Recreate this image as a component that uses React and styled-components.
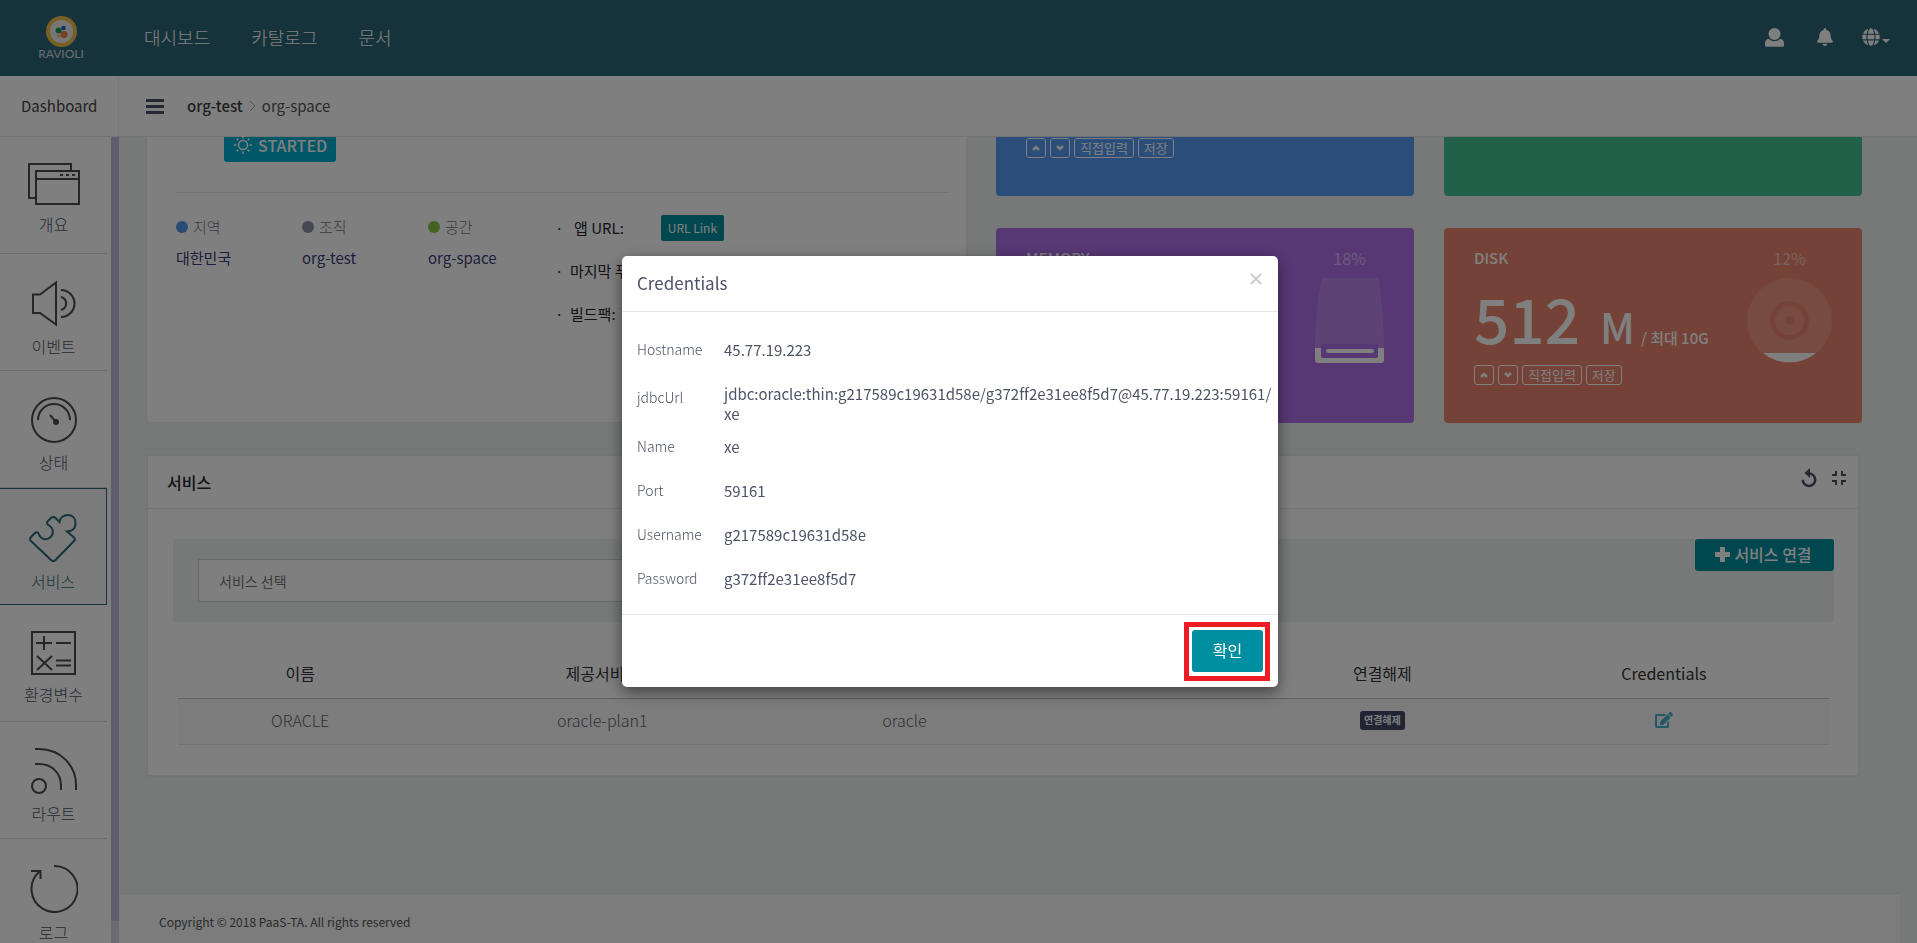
import React from "react";
import styled, { createGlobalStyle } from "styled-components";
import { FaBell, FaGlobe, FaEdit } from "react-icons/fa";
import { MdFullscreenExit } from "react-icons/md";

const Global = createGlobalStyle`
  *, *::before, *::after { box-sizing: border-box; }
  body {
    margin: 0;
    font-family: "Noto Sans CJK KR", "Noto Sans", sans-serif;
    font-size: 16px;
    line-height: 20px;
    font-variant-ligatures: none;
    color: #4d5365;
    background: #eff3f2;
  }
  button, input, select { font: inherit; color: inherit; }
  a { color: inherit; text-decoration: none; }
  h1, h2, h3, p, ul, dl, dd { margin: 0; padding: 0; font-weight: 400; }
  ul { list-style: none; }
  svg { display: block; flex: none; }
`;

const Page = styled.div`
  height: 100vh;
  display: flex;
  flex-direction: column;
  overflow: hidden;
`;

const TopBar = styled.header`
  flex: none;
  height: 76px;
  display: flex;
  align-items: center;
  padding: 0 27px 2px 37px;
  background: #2d6778;
  color: #fff;
`;

const Logo = styled.a`
  width: 48px;
  margin-right: 59px;
  padding-top: 2px;
  display: flex;
  flex-direction: column;
  align-items: center;
  font-family: "Lato", sans-serif;
  font-size: 12px;
  line-height: 14px;
  color: #d5dde0;
`;

const TopNav = styled.nav`
  flex: 1;
  display: flex;
  gap: 41px;
  font-size: 18px;
  font-weight: 300;
`;

const TopActions = styled.div`
  display: flex;
  align-items: center;
  gap: 28px;
`;

const IconButton = styled.button`
  display: flex;
  align-items: center;
  gap: 2px;
  padding: 0;
  border: 0;
  background: none;
`;

const UserButton = styled(IconButton)`
  margin-right: 4px;
`;

const SubBar = styled.div`
  flex: none;
  height: 61px;
  display: flex;
  align-items: center;
  background: #fff;
  border-bottom: 1px solid #e4e6e6;
`;

const SubTitle = styled.div`
  width: 119px;
  align-self: stretch;
  display: flex;
  align-items: center;
  padding-left: 21px;
  border-right: 1px solid #f0f0f0;
  font-size: 15px;
  color: #444;
`;

const MenuButton = styled(IconButton)`
  margin: 0 23px 0 27px;
  color: #4a4f66;
`;

const Crumbs = styled.div`
  display: flex;
  align-items: center;
  gap: 6px;
  font-size: 15px;
  color: #555;
`;

const CrumbHome = styled.a`
  font-weight: 500;
  color: #3c3c3c;
`;

const Body = styled.div`
  flex: 1;
  min-height: 0;
  display: flex;
`;

const Side = styled.aside`
  flex: none;
  width: 119px;
  display: flex;
  background: #fff;
`;

const SideList = styled.ul`
  width: 107px;
  overflow: hidden;
`;

const SideItem = styled.li`
  height: 117px;
  border-bottom: 1px solid #d9d9d9;
  & svg { color: #4d4d4d; }
  ${(p) =>
    p.$active &&
    `
    background: #f7f7f7;
    color: #2c6878;
    border-right: 1px solid #2c6878;
    border-bottom-color: #2c6878;
    box-shadow: inset 0 1px 0 #2c6878;
    & svg { color: #2c6878; }
  `}
`;

const SideLink = styled.a`
  display: flex;
  flex-direction: column;
  align-items: center;
  gap: 8px;
  padding-top: 26px;
  font-weight: 300;
  line-height: 22px;
`;

const SideScroll = styled.div`
  width: 8px;
  margin-left: 4px;
  padding-bottom: 22px;
  background: #d9d6ea;
  &::before {
    content: "";
    display: block;
    height: 100%;
    background: #bfbbdc;
  }
`;

const Main = styled.main`
  flex: 1;
  min-width: 0;
  display: flex;
  flex-direction: column;
  margin-right: 17px;
`;

const Content = styled.div`
  flex: 1;
  display: flex;
  flex-direction: column;
  gap: 31px;
  padding: 0 38px 0 27px;
`;

const Overview = styled.section`
  display: grid;
  grid-template-columns: 821px 1fr;
  gap: 29px;
`;

const AppCard = styled.div`
  padding: 0 17px 0 29px;
  background: #fff;
  border: 1px solid #e6e9e9;
  border-top: 0;
  border-radius: 0 0 5px 5px;
`;

const StatusBadge = styled.div`
  width: 112px;
  height: 25px;
  margin-left: 48px;
  padding: 0 10px 9px;
  display: flex;
  align-items: center;
  gap: 6px;
  border-radius: 0 0 3px 3px;
  background: #00aed1;
  color: #fff;
  font-weight: 500;
`;

const AppInfo = styled.div`
  display: flex;
  margin-top: 30px;
  padding-top: 21px;
  border-top: 1px solid #e2e4e4;
`;

const Place = styled.div`
  width: 126px;
  padding-top: 3px;
  font-size: 15px;
  color: #3c3c78;
`;

const PlaceLabel = styled.div`
  display: flex;
  align-items: center;
  gap: 5px;
  margin-bottom: 11px;
  font-weight: 300;
  color: #70747c;
  &::before {
    content: "";
    width: 12px;
    height: 12px;
    border-radius: 50%;
    background: ${(p) => p.$dot};
  }
`;

const Facts = styled.ul`
  display: flex;
  flex-direction: column;
  gap: 16px;
  padding-left: 1px;
  font-size: 15px;
  color: #26262e;
`;

const Fact = styled.li`
  display: flex;
  align-items: center;
  gap: 9px;
  min-height: 27px;
  &::before {
    content: "·";
    width: 6px;
  }
`;

const UrlName = styled.span`
  padding-left: 4px;
`;

const UrlLink = styled.a`
  margin-left: 28px;
  padding: 3px 7px;
  border-radius: 2px;
  background: #008fa1;
  color: #fff;
  font-size: 12px;
`;

const Tiles = styled.div`
  display: grid;
  grid-template-columns: 1fr 1fr;
  grid-template-rows: 59px 195px;
  gap: 32px 30px;
`;

const Tile = styled.article`
  display: flex;
  justify-content: space-between;
  padding: ${(p) => (p.$clipped ? "1px 30px" : "18px 30px")};
  border-radius: ${(p) => (p.$clipped ? "0 0 4px 4px" : "4px")};
  background: ${(p) => p.$color};
  color: #fff;
`;

const TileTitle = styled.h3`
  font-size: 15px;
  font-weight: 500;
  line-height: 24px;
`;

const Amount = styled.p`
  height: 95px;
  display: flex;
  align-items: baseline;
  line-height: 95px;
  font-size: 62px;
  font-weight: 500;
`;

const Unit = styled.span`
  margin: 0 6px 0 20px;
  font-size: 42px;
`;

const Limit = styled.span`
  font-size: 15px;
`;

const Chips = styled.div`
  display: flex;
  gap: 4px;
`;

const Chip = styled.button`
  height: 20px;
  min-width: 20px;
  display: flex;
  align-items: center;
  justify-content: center;
  padding: 0 5px;
  border: 1px solid #fff;
  border-radius: 3px;
  background: none;
  font-size: 13px;
  line-height: 16px;
`;

const Gauge = styled.div`
  display: flex;
  flex-direction: column;
  align-items: center;
  gap: 8px;
  line-height: 24px;
`;

const Percent = styled.span`
  opacity: 0.5;
`;

const Panel = styled.section`
  margin-right: 2px;
  border: 2px solid #e8ebeb;
  background: #fff;
`;

const PanelHead = styled.div`
  height: 53px;
  display: flex;
  align-items: center;
  gap: 9px;
  padding: 0 7px 0 19px;
  border-bottom: 1px solid #e4e6e6;
  color: #4a4f66;
`;

const PanelTitle = styled.h2`
  flex: 1;
  font-size: 16px;
  font-weight: 500;
  color: #26262c;
`;

const PanelTool = styled(IconButton)`
  padding-bottom: 8px;
`;

const PanelBody = styled.div`
  padding: 30px 24px 30px 25px;
`;

const Picker = styled.div`
  height: 83px;
  display: flex;
  align-items: flex-start;
  justify-content: space-between;
  padding-left: 25px;
  background: #eff3f2;
`;

const ServiceSelect = styled.select`
  appearance: none;
  width: 50%;
  height: 43px;
  margin-top: 20px;
  padding: 0 20px;
  border: 1px solid #ccd2d2;
  border-radius: 0;
  background: #fff;
  font-size: 14px;
  color: #777;
`;

const BindButton = styled.button`
  width: 139px;
  height: 32px;
  display: flex;
  align-items: center;
  justify-content: center;
  gap: 4px;
  padding: 0 2px 2px 0;
  border: 0;
  border-radius: 3px;
  background: #008fa1;
  color: #fff;
  font-weight: 500;
`;

const Services = styled.table`
  width: calc(100% - 10px);
  margin: 28px 5px 0;
  table-layout: fixed;
  border-collapse: collapse;
  text-align: center;
`;

const Col = styled.col`
  width: ${(p) => p.$w};
`;

const Th = styled.th`
  height: 48px;
  padding: 0 0 2px;
  border-bottom: 1px solid #bfc3c6;
  font-weight: 400;
  color: #333;
`;

const Td = styled.td`
  height: 46px;
  padding: 0 0 2px;
  border-bottom: 1px solid #e2e4e4;
  background: #f9f9f9;
  font-weight: 300;
  color: #62656f;
  & > button { margin: 0 auto; }
`;

const UnbindButton = styled.button`
  display: block;
  height: 19px;
  width: 45px;
  padding: 0;
  border: 0;
  border-radius: 3px;
  background: #454867;
  color: #fff;
  font-size: 10px;
  font-weight: 700;
  line-height: 18px;
`;

const EditButton = styled(IconButton)`
  color: #4bb0cc;
`;

const Footer = styled.footer`
  height: 50px;
  padding: 18px 40px 0;
  border-top: 1px solid #e4e6e6;
  background: #f8f9f9;
  font-size: 12px;
  color: #555;
`;

const Backdrop = styled.div`
  position: fixed;
  inset: 0;
  z-index: 10;
  display: flex;
  align-items: center;
  justify-content: center;
  padding: 0 17px 1px 0;
  background: rgba(0, 0, 0, 0.5);
`;

const Dialog = styled.div`
  width: 656px;
  border-radius: 5px;
  background: #fff;
  box-shadow: 0 5px 15px rgba(0, 0, 0, 0.5);
`;

const DialogHead = styled.div`
  height: 56px;
  display: flex;
  justify-content: space-between;
  padding: 17px 16px 0 15px;
  border-bottom: 1px solid #e5e5e5;
`;

const DialogTitle = styled.h2`
  font-size: 17px;
`;

const CloseButton = styled(IconButton)`
  height: 12px;
  color: #ccc;
`;

const Fields = styled.dl`
  padding: 15px 4px 14px 15px;
`;

const Field = styled.div`
  min-height: 44px;
  display: grid;
  grid-template-columns: 87px 1fr;
  align-items: center;
  font-size: 15px;
`;

const FieldName = styled.dt`
  font-size: 14px;
  font-weight: 300;
`;

const FieldValue = styled.dd`
  align-self: start;
  padding-top: 13px;
`;

const DialogFoot = styled.div`
  height: 73px;
  display: flex;
  justify-content: flex-end;
  padding: 7px 8px 0;
  border-top: 1px solid #e5e5e5;
`;

const Highlight = styled.div`
  width: 86px;
  height: 59px;
  padding: 3px;
  border: 5px solid #ed1c24;
`;

const OkButton = styled.button`
  width: 71px;
  height: 42px;
  padding: 0 0 2px;
  border: 0;
  border-radius: 3px;
  background: #008fa1;
  color: #fff;
`;

const line = { fill: "none", stroke: "currentColor", strokeWidth: 2 };

const WindowsIcon = () => (
  <svg width="52" height="42" viewBox="0 0 52 42" {...line}>
    <path d="M7 35H1V1h42v7M8 8h43v33H8zM8 16h43" />
    <path d="M32 12h3M38 12h3M44 12h3" />
  </svg>
);
const SpeakerIcon = () => (
  <svg width="46" height="47" viewBox="0 0 46 47" {...line}>
    <path d="M2 14.500h7L25 2.500v42L9 33H2zM30 10a13.500 13.500 0 0 1 0 27M30 17a6.700 6.700 0 0 1 0 13" />
  </svg>
);
const GaugeIcon = () => (
  <svg width="46" height="46" viewBox="0 0 46 46" {...line}>
    <circle cx="23" cy="23" r="22" />
    <path d="M7 23a16 16 0 0 1 32 0M19 18l6 7" />
    <circle cx="25" cy="25" r="2" fill="currentColor" />
  </svg>
);
const PuzzleIcon = () => (
  <svg width="48" height="48" viewBox="0 0 48 48" {...line}>
    <path d="M2 23l4-4c1.500-1.500 3-1 4 1.500 2 5 7 6 11 3s4-9-1.500-12.500c-2-1-2-2.500-.5-4l3-3c1.500-1.500 3-1.500 4.500 0l4 4c1-9 16-10 16 1 .2 6-4 8.500-8.500 8.500l7 6c1 1 1 2.500 0 3.500L26.500 46c-1.500 1.500-3 1.500-4.500 0L2 27c-1.300-1.300-1.300-2.700 0-4z" />
  </svg>
);
const CalcIcon = () => (
  <svg width="45" height="44" viewBox="0 0 45 44" {...line}>
    <path d="M1 1h43v42H1zM5 12h16M13 5v14M25 12h15M25 29.500h15M25 34.500h15M6 25l15 14M21 25L6 39" />
  </svg>
);
const RouteIcon = () => (
  <svg width="46" height="46" viewBox="0 0 46 46" {...line}>
    <circle cx="8" cy="38" r="7" />
    <path d="M4 1h4c22 0 37 17 37 36v5M4 16h4c13 0 22 9 22 22v4" />
  </svg>
);
const LogIcon = () => (
  <svg width="48" height="48" viewBox="0 0 48 48" {...line}>
    <path d="M24 1a23 23 0 1 1-15 6M1 6h9.500v8" />
  </svg>
);
const PersonIcon = () => (
  <svg width="19" height="19" viewBox="0 0 19 19" fill="#fff">
    <circle cx="9.500" cy="6" r="6" />
    <path d="M4 11c3.500 3 7.500 3 11 0 3 0 4 2 4 5v1.500c0 .8-.5 1.200-1.200 1.200H1.200C.5 18.700 0 18.300 0 17.500V16c0-3 1-5 4-5z" />
  </svg>
);
const SunIcon = () => (
  <svg width="18" height="18" viewBox="0 0 18 18" fill="none" stroke="#fff" strokeWidth="1.500">
    <circle cx="9" cy="9" r="4.500" />
    <path d="M9 0v2.500M9 15.500V18M0 9h2.500M15.500 9H18M2.600 2.600l1.700 1.700M13.700 13.700l1.700 1.700M15.400 2.600l-1.700 1.700M4.300 13.700l-1.700 1.700" />
  </svg>
);
const BarsIcon = () => (
  <svg width="18" height="15" viewBox="0 0 18 15" fill="currentColor">
    <path d="M0 0h18v3H0zM0 6h18v3H0zM0 12h18v3H0z" />
  </svg>
);
const LogoMark = () => (
  <svg width="31" height="31" viewBox="0 0 31 31">
    <circle cx="15.500" cy="15.500" r="15.500" fill="#f0c04a" />
    <circle cx="15.500" cy="15.500" r="11.500" fill="#eee" />
    <circle cx="17.500" cy="12" r="2.300" fill="#2a5fc4" />
    <circle cx="12.500" cy="14.500" r="3" fill="#1a9b50" />
    <circle cx="18" cy="18.500" r="3.500" fill="#f08040" />
    <circle cx="12.500" cy="20" r="1.200" fill="#f0a040" />
  </svg>
);
const PlusIcon = () => (
  <svg width="15" height="15" viewBox="0 0 15 15" fill="currentColor">
    <path d="M5 0h5v5h5v5h-5v5H5v-5H0V5h5z" />
  </svg>
);
const ReloadIcon = () => (
  <svg width="17" height="20" viewBox="0 0 17 20" fill="none" stroke="currentColor" strokeWidth="2.500">
    <path d="M8 5.500a6.200 6.200 0 1 1-6.200 6.200" />
    <path d="M9 0v10L3.500 5z" fill="currentColor" stroke="none" />
  </svg>
);
const ChevronIcon = ({ down }) => (
  <svg width="8" height="6" viewBox="0 0 8 6" fill="none" stroke="currentColor" strokeWidth="2.500">
    <path d={down ? "M1 1l3 3 3-3" : "M1 5l3-3 3 3"} />
  </svg>
);
const CloseIcon = () => (
  <svg width="12" height="12" viewBox="0 0 12 12" {...line}>
    <path d="M1 1l10 10M11 1L1 11" />
  </svg>
);
const MemoryIcon = () => (
  <svg width="69" height="85" viewBox="0 0 69 85" fill="#fff">
    <path opacity=".15" d="M9 0h52q3 0 3 3 5 40 5 63v4H0V60Q1 35 6 3q0-3 3-3z" />
    <path d="M0 70h69v12q0 3-3 3H3q-3 0-3-3z" />
    <rect x="6" y="66" width="57" height="14" rx="2" fill="#af70e8" />
    <rect x="11" y="71" width="48" height="4" rx="2" />
  </svg>
);
const DiskIcon = () => (
  <svg width="85" height="85" viewBox="0 0 85 85" fill="#fff">
    <circle cx="42.500" cy="42.500" r="42.500" opacity=".15" />
    <path d="M16 75h53a42.500 42.500 0 0 1-53 0z" />
    <circle cx="42.500" cy="42.500" r="17" fill="none" stroke="#ea8570" strokeWidth="5" />
    <circle cx="42.500" cy="42.500" r="4.500" fill="#ea8570" />
  </svg>
);

const menu = [
  ["개요", WindowsIcon],
  ["이벤트", SpeakerIcon],
  ["상태", GaugeIcon],
  ["서비스", PuzzleIcon],
  ["환경변수", CalcIcon],
  ["라우트", RouteIcon],
  ["로그", LogIcon],
];

const credentials = [
  ["Hostname", "45.77.19.223"],
  ["jdbcUrl", <>jdbc:oracle:thin:g217589c19631d58e/g372ff2e31ee8f5d7@45.77.19.223:59161/<wbr />xe</>],
  ["Name", "xe"],
  ["Port", "59161"],
  ["Username", "g217589c19631d58e"],
  ["Password", "g372ff2e31ee8f5d7"],
];

function TileControls() {
  return (
    <Chips>
      <Chip aria-label="증가"><ChevronIcon /></Chip>
      <Chip aria-label="감소"><ChevronIcon down /></Chip>
      <Chip>직접입력</Chip>
      <Chip>저장</Chip>
    </Chips>
  );
}

export default function App() {
  return (
    <>
      <Global />
      <Page>
        <TopBar>
          <Logo href="#"><LogoMark />RAVIOLI</Logo>
          <TopNav>
            <a href="#">대시보드</a>
            <a href="#">카탈로그</a>
            <a href="#">문서</a>
          </TopNav>
          <TopActions>
            <UserButton aria-label="사용자"><PersonIcon /></UserButton>
            <IconButton aria-label="알림"><FaBell size={18} color="#fff" /></IconButton>
            <IconButton aria-label="언어">
              <FaGlobe size={18} color="#fff" />
              <svg width="8" height="12" viewBox="0 0 8 12" fill="#fff"><path d="M0 8h8L4 12z" /></svg>
            </IconButton>
          </TopActions>
        </TopBar>
        <SubBar>
          <SubTitle>Dashboard</SubTitle>
          <MenuButton aria-label="메뉴"><BarsIcon /></MenuButton>
          <Crumbs>
            <CrumbHome href="#">org-test</CrumbHome>
            <svg width="7" height="12" viewBox="0 0 7 12" fill="none" stroke="#aaa"><path d="M1 1l5 5-5 5" /></svg>
            <a href="#">org-space</a>
          </Crumbs>
        </SubBar>
        <Body>
          <Side>
            <SideList>
              {menu.map(([label, Icon]) => (
                <SideItem key={label} $active={label === "서비스"}>
                  <SideLink href="#"><Icon />{label}</SideLink>
                </SideItem>
              ))}
            </SideList>
            <SideScroll />
          </Side>
          <Main>
            <Content>
              <Overview>
                <AppCard>
                  <StatusBadge><SunIcon />STARTED</StatusBadge>
                  <AppInfo>
                    <Place><PlaceLabel $dot="#4f97ea">지역</PlaceLabel>대한민국</Place>
                    <Place><PlaceLabel $dot="#8a8fa5">조직</PlaceLabel>org-test</Place>
                    <Place><PlaceLabel $dot="#87c440">공간</PlaceLabel>org-space</Place>
                    <Facts>
                      <Fact><UrlName>앱 URL:</UrlName><UrlLink href="#">URL Link</UrlLink></Fact>
                      <Fact>마지막 푸시:</Fact>
                      <Fact>빌드팩:</Fact>
                    </Facts>
                  </AppInfo>
                </AppCard>
                <Tiles>
                  <Tile $clipped $color="#559cf2"><TileControls /></Tile>
                  <Tile $clipped $color="#42c294" />
                  <Tile $color="#af70e8">
                    <TileTitle>MEMORY</TileTitle>
                    <Gauge><Percent>18%</Percent><MemoryIcon /></Gauge>
                  </Tile>
                  <Tile $color="#ea8570">
                    <div>
                      <TileTitle>DISK</TileTitle>
                      <Amount>512<Unit>M</Unit><Limit>/ 최대 10G</Limit></Amount>
                      <TileControls />
                    </div>
                    <Gauge><Percent>12%</Percent><DiskIcon /></Gauge>
                  </Tile>
                </Tiles>
              </Overview>
              <Panel>
                <PanelHead>
                  <PanelTitle>서비스</PanelTitle>
                  <PanelTool aria-label="새로고침"><ReloadIcon /></PanelTool>
                  <PanelTool aria-label="접기"><MdFullscreenExit size={24} /></PanelTool>
                </PanelHead>
                <PanelBody>
                  <Picker>
                    <ServiceSelect aria-label="서비스 선택" defaultValue="">
                      <option value="">서비스 선택</option>
                    </ServiceSelect>
                    <BindButton><PlusIcon />서비스 연결</BindButton>
                  </Picker>
                  <Services>
                    <colgroup>
                      <Col $w="14.8%" /><Col $w="21.8%" /><Col $w="14.8%" /><Col $w="14.5%" /><Col $w="14.1%" /><Col $w="20%" />
                    </colgroup>
                    <thead>
                      <tr>
                        <Th>이름</Th><Th>제공서비스</Th><Th /><Th /><Th>연결해제</Th><Th>Credentials</Th>
                      </tr>
                    </thead>
                    <tbody>
                      <tr>
                        <Td>ORACLE</Td><Td>oracle-plan1</Td><Td>oracle</Td><Td />
                        <Td><UnbindButton>연결해제</UnbindButton></Td>
                        <Td><EditButton aria-label="Credentials"><FaEdit size={18} /></EditButton></Td>
                      </tr>
                    </tbody>
                  </Services>
                </PanelBody>
              </Panel>
            </Content>
            <Footer>Copyright © 2018 PaaS-TA. All rights reserved</Footer>
          </Main>
        </Body>
      </Page>
      <Backdrop>
        <Dialog role="dialog" aria-modal="true" aria-labelledby="credentials-title">
          <DialogHead>
            <DialogTitle id="credentials-title">Credentials</DialogTitle>
            <CloseButton aria-label="닫기"><CloseIcon /></CloseButton>
          </DialogHead>
          <Fields>
            {credentials.map(([name, value]) => (
              <Field key={name}>
                <FieldName>{name}</FieldName>
                <FieldValue>{value}</FieldValue>
              </Field>
            ))}
          </Fields>
          <DialogFoot>
            <Highlight><OkButton>확인</OkButton></Highlight>
          </DialogFoot>
        </Dialog>
      </Backdrop>
    </>
  );
}
